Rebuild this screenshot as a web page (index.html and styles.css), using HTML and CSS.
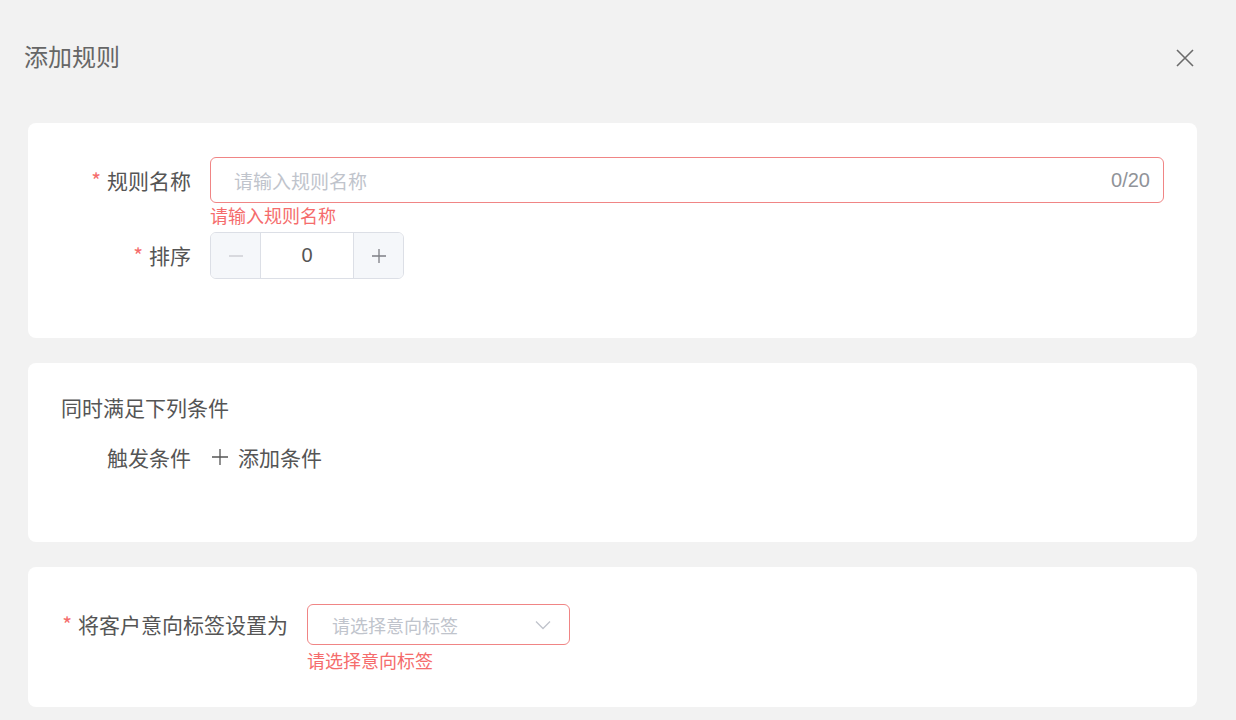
FILE: index.html
```html
<!DOCTYPE html>
<html lang="zh-CN">
<head>
  <meta charset="UTF-8">
  <meta name="viewport" content="width=device-width, initial-scale=1.0">
  <title>添加规则</title>
  <link rel="stylesheet" href="styles.css">
</head>
<body>
  <div class="header">
    <h1 class="title">添加规则</h1>
    <span class="close">
      <svg width="18" height="18" viewBox="0 0 18 18"><path d="M1 1L17 17M17 1L1 17" stroke="#6b6b6b" stroke-width="1.6" fill="none"/></svg>
    </span>
  </div>

  <div class="content">
    <div class="card card-basic">
      <div class="form-row">
        <label class="label"><span class="star">*</span>规则名称</label>
        <div class="field">
          <div class="text-input is-error">
            <span class="placeholder">请输入规则名称</span>
            <span class="counter">0/20</span>
          </div>
          <div class="error">请输入规则名称</div>
        </div>
      </div>
      <div class="form-row row-sort">
        <label class="label"><span class="star">*</span>排序</label>
        <div class="field">
          <div class="number-input">
            <span class="step step-minus">
              <svg width="16" height="16" viewBox="0 0 16 16"><path d="M1 8H15" stroke="#c8cacf" stroke-width="1.3"/></svg>
            </span>
            <span class="number-value">0</span>
            <span class="step step-plus">
              <svg width="16" height="16" viewBox="0 0 16 16"><path d="M1 8H15M8 1V15" stroke="#7d7f85" stroke-width="1.3"/></svg>
            </span>
          </div>
        </div>
      </div>
    </div>

    <div class="card card-cond">
      <div class="section-title">同时满足下列条件</div>
      <div class="form-row row-cond">
        <label class="label">触发条件</label>
        <div class="field">
          <span class="add-btn">
            <svg width="16" height="16" viewBox="0 0 16 16"><path d="M0 8H16M8 0V16" stroke="#555" stroke-width="1.3"/></svg>
            添加条件
          </span>
        </div>
      </div>
    </div>

    <div class="card card-tag">
      <div class="form-row">
        <label class="label label-wide"><span class="star">*</span>将客户意向标签设置为</label>
        <div class="field">
          <div class="select is-error">
            <span class="placeholder placeholder-sm">请选择意向标签</span>
            <svg class="arrow" width="16" height="10" viewBox="0 0 16 10"><path d="M1 1.5L8 8.5L15 1.5" stroke="#c0c4cc" stroke-width="1.3" fill="none"/></svg>
          </div>
          <div class="error error-select">请选择意向标签</div>
        </div>
      </div>
    </div>
  </div>
</body>
</html>
```

FILE: styles.css
```css
body {
  margin: 0;
  background-color: #f2f2f2;
  font-family: "Noto Sans CJK SC", "Noto Sans", sans-serif;
  color: #555;
}
.header {
  height: 116px;
  display: flex;
  align-items: center;
  justify-content: space-between;
  padding: 0 42px 0 24px;
}
.title {
  margin: 0 0 4px 0;
  font-size: 24px;
  font-weight: normal;
  color: #666;
  line-height: 1;
}
.close {
  display: flex;
}
.content {
  padding: 7px 39px 0 28px;
  display: flex;
  flex-direction: column;
  gap: 25px;
}
.card {
  background-color: #ffffff;
  border-radius: 8px;
  padding: 34px 33px 59px 33px;
}
.form-row {
  display: flex;
  align-items: flex-start;
}
.label {
  width: 149px;
  flex-shrink: 0;
  box-sizing: border-box;
  padding-right: 19px;
  text-align: right;
  font-size: 21px;
  line-height: 46px;
  color: #555;
}
.label-wide {
  width: 246px;
  line-height: 41px;
}
.star {
  color: #f56c6c;
  margin-right: 6px;
}
.field {
  flex: 1;
}
.text-input {
  height: 46px;
  box-sizing: border-box;
  border: 1px solid #dcdfe6;
  border-radius: 6px;
  display: flex;
  align-items: center;
  justify-content: space-between;
  padding: 0 13px 0 23px;
}
.placeholder {
  color: #c0c4cc;
  font-size: 19px;
}
.placeholder-sm {
  font-size: 18px;
}
.counter {
  color: #909399;
  font-family: "Liberation Sans", sans-serif;
  font-size: 20px;
}
.error {
  color: #f56c6c;
  font-size: 18px;
  line-height: 18px;
  margin-top: 3px;
}
.row-sort {
  margin-top: 8px;
}
.number-input {
  width: 194px;
  height: 47px;
  box-sizing: border-box;
  border: 1px solid #dcdfe6;
  border-radius: 6px;
  display: flex;
  overflow: hidden;
}
.step {
  width: 49px;
  background-color: #f5f7fa;
  display: flex;
  align-items: center;
  justify-content: center;
}
.step-minus {
  border-right: 1px solid #dcdfe6;
}
.step-plus {
  border-left: 1px solid #dcdfe6;
}
.number-value {
  flex: 1;
  display: flex;
  align-items: center;
  justify-content: center;
  font-family: "Liberation Sans", sans-serif;
  font-size: 20px;
  color: #555;
}
.card-cond {
  padding-top: 33px;
  padding-bottom: 62px;
}
.section-title {
  font-size: 21px;
  line-height: 23px;
}
.row-cond {
  margin-top: 15px;
}
.add-btn {
  display: inline-flex;
  align-items: center;
  gap: 10px;
  height: 46px;
  padding-left: 2px;
  font-size: 21px;
  color: #555;
}
.card-tag {
  padding-top: 37px;
  padding-bottom: 38px;
}
.select {
  width: 263px;
  height: 41px;
  box-sizing: border-box;
  border: 1px solid #dcdfe6;
  border-radius: 6px;
  display: flex;
  align-items: center;
  justify-content: space-between;
  padding: 0 18px 0 24px;
}
.text-input.is-error,
.select.is-error {
  border-color: #f08585;
}
.error-select {
  margin-top: 6px;
}
```
